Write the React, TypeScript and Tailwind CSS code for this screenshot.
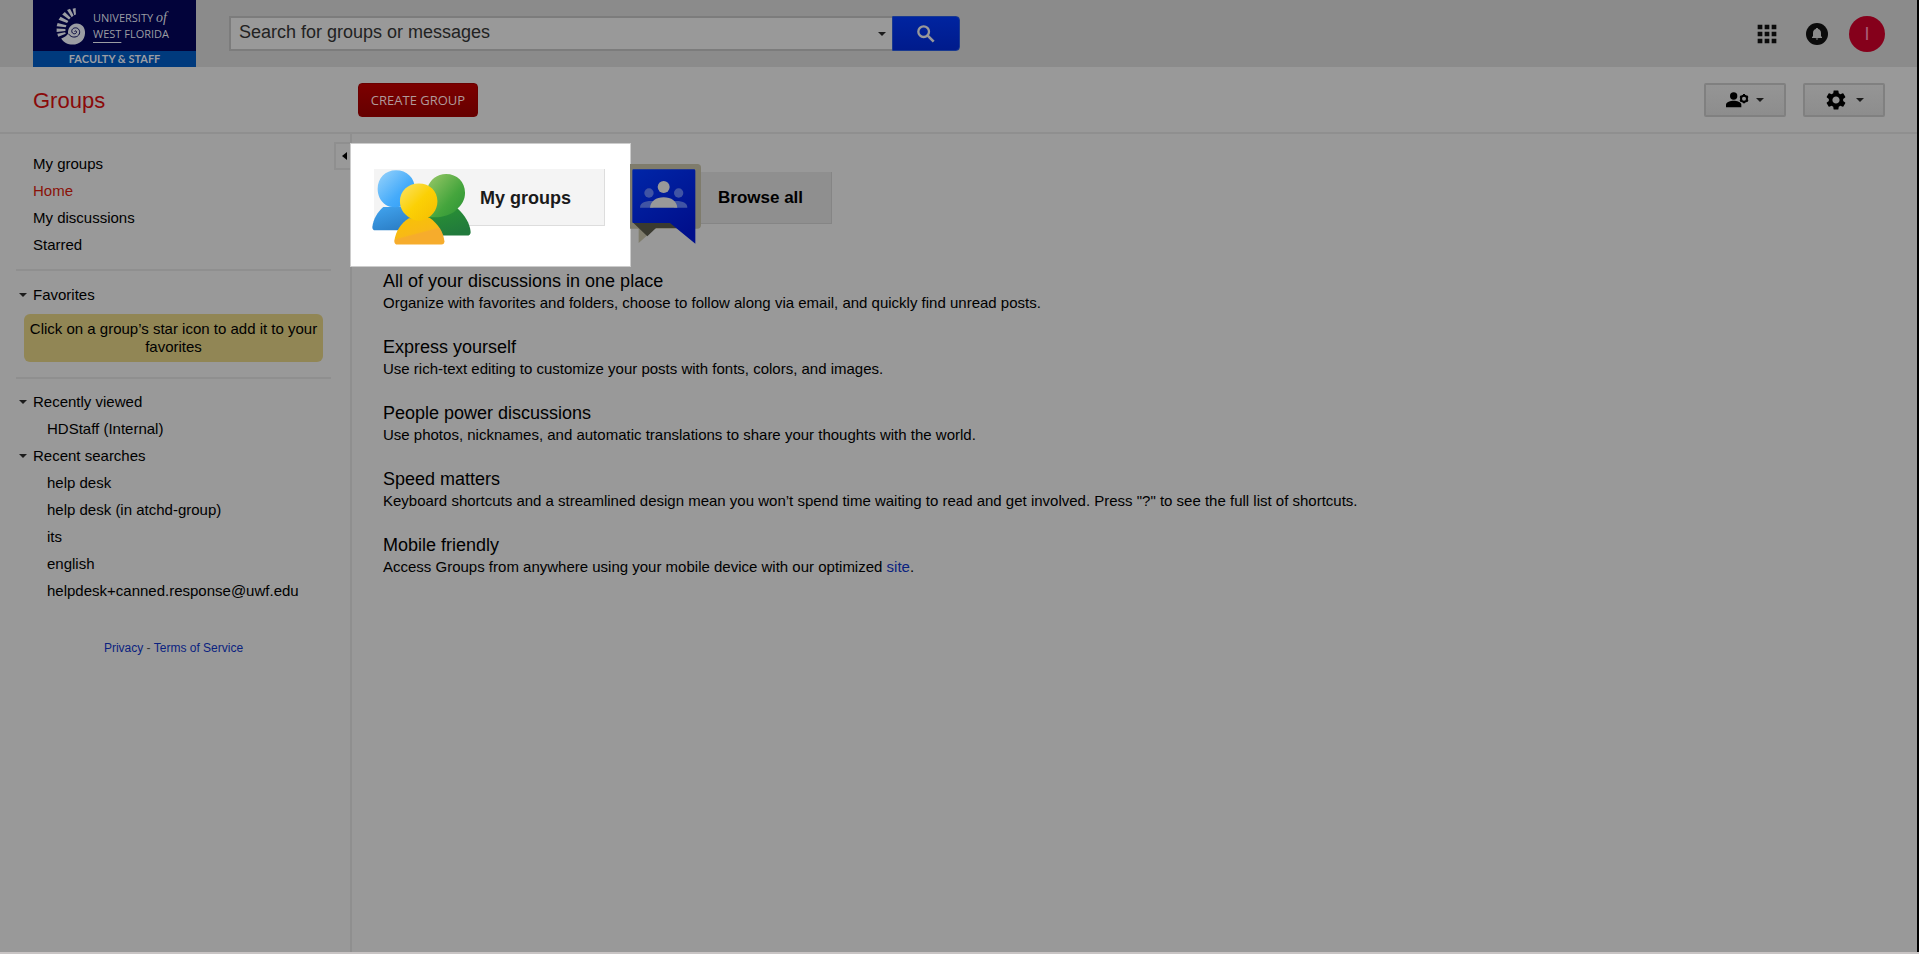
import React from 'react';
import { MdApps, MdSettings } from 'react-icons/md';

interface Feature {
  title: string;
  text: React.ReactNode;
}

const navItems = ['My groups', 'Home', 'My discussions', 'Starred'];

const recentSearches = [
  'help desk',
  'help desk (in atchd-group)',
  'its',
  'english',
  'helpdesk+canned.response@uwf.edu',
];

const features: Feature[] = [
  {
    title: 'All of your discussions in one place',
    text: 'Organize with favorites and folders, choose to follow along via email, and quickly find unread posts.',
  },
  {
    title: 'Express yourself',
    text: 'Use rich-text editing to customize your posts with fonts, colors, and images.',
  },
  {
    title: 'People power discussions',
    text: 'Use photos, nicknames, and automatic translations to share your thoughts with the world.',
  },
  {
    title: 'Speed matters',
    text: 'Keyboard shortcuts and a streamlined design mean you won’t spend time waiting to read and get involved. Press "?" to see the full list of shortcuts.',
  },
  {
    title: 'Mobile friendly',
    text: (
      <>
        Access Groups from anywhere using your mobile device with our optimized{' '}
        <a href="#site" className="text-[#0a2280]">
          site
        </a>
        .
      </>
    ),
  },
];

const Caret = () => (
  <svg viewBox="0 0 8 4" className="w-2 h-1 shrink-0" fill="#1c1c1c" aria-hidden="true">
    <path d="M0 0 H8 L4 4 Z" />
  </svg>
);

const SearchIcon = () => (
  <svg viewBox="0 0 54 54" className="size-[18px]" fill="none" stroke="#999" aria-hidden="true">
    <circle cx="20" cy="20" r="16" strokeWidth="7" />
    <path d="M32 32 L50 50" strokeWidth="8" />
  </svg>
);

const Nautilus = () => (
  <svg viewBox="165 15 98 120" className="w-8 h-10 shrink-0" aria-hidden="true">
    <g fill="#9b9da3">
      <path d="M219 22 L228 20 L229 40 L224 42 Z" />
      <path d="M202 26 L211 22 L222 43 L216 48 Z" />
      <path d="M187 40 L195 32 L213 50 L208 55 Z" />
      <path d="M176 56 L182 47 L206 60 L202 66 Z" />
      <path d="M170 76 L173 66 L200 73 L198 79 Z" />
      <path d="M170 93 L170 83 L197 84 L197 90 Z" />
      <path d="M175 108 L172 99 L196 94 L198 99 Z" />
      <path d="M184 113 C194 111 200 105 205 99 C203 82 214 68 231 67 C248 67 258 80 257 97 C256 118 240 132 219 132 C204 132 190 124 184 113 Z" />
    </g>
    <path
      d="M207 99 C211 108 224 112 234 106 C244 99 242 84 231 81 C222 79 214 86 217 94 C220 101 231 100 231 93 C230 89 226 89 225 92"
      fill="none"
      stroke="#02033a"
      strokeWidth="3"
    />
  </svg>
);

const Logo = () => (
  <a
    href="#uwf"
    className="flex flex-col w-[163px] h-[67px] shrink-0 bg-[#02033a] text-[#9b9da3]"
  >
    <div className="flex flex-1 items-center gap-1.5 pl-[22px]">
      <Nautilus />
      <div className="font-['Open_Sans',sans-serif] text-[11px] leading-4">
        <div>
          UNIVERSITY{' '}
          <span className="font-['Liberation_Serif',serif] italic text-sm leading-4">of</span>
        </div>
        <div>
          <span className="underline underline-offset-4">WEST</span> FLORIDA
        </div>
      </div>
    </div>
    <div className="h-4 bg-[#003a7d] text-center font-[Lato,sans-serif] font-bold text-[11px] leading-4">
      FACULTY &amp; STAFF
    </div>
  </a>
);

const BellIcon = () => (
  <svg viewBox="0 0 22 22" className="size-[22px]" aria-hidden="true">
    <circle cx="11" cy="11" r="11" fill="#0b0b0b" />
    <path
      d="M11 5 C11.8 5 12.2 5.5 12.2 6.1 C14 6.6 15 8 15 10 V13 L16 14.2 V15 H6 V14.2 L7 13 V10 C7 8 8 6.6 9.8 6.1 C9.8 5.5 10.2 5 11 5 Z M9.8 15.6 H12.2 C12.2 17 9.8 17 9.8 15.6 Z"
      fill="#8b8b8b"
    />
  </svg>
);

const MembersIcon = () => (
  <svg viewBox="0 0 69 46" className="w-[23px] h-4" aria-hidden="true">
    <circle cx="23" cy="11" r="11" />
    <path d="M0 45 V37 C0 29 14 25 23 25 C32 25 46 29 46 37 V45 Z" />
    <circle cx="54" cy="19" r="9" fill="none" stroke="#000" strokeWidth="6" />
    <path
      d="M54 5 V9 M54 29 V33 M42 12 L46 14 M62 24 L66 26 M42 26 L46 24 M62 14 L66 12"
      stroke="#000"
      strokeWidth="6"
    />
  </svg>
);

const PeopleIcon = () => (
  <svg viewBox="126 118 298 231" className="absolute -left-0.5 top-0 w-[99px] h-[77px]" aria-hidden="true">
    <defs>
      <linearGradient id="blueHead" x1="0" y1="0" x2="1" y2="1">
        <stop offset="0" stopColor="#9ad4fb" />
        <stop offset="0.6" stopColor="#45abfa" />
        <stop offset="1" stopColor="#2f9cf6" />
      </linearGradient>
      <linearGradient id="blueBody" x1="0" y1="0" x2="0.6" y2="1">
        <stop offset="0" stopColor="#42a5f0" />
        <stop offset="1" stopColor="#2b7ec6" />
      </linearGradient>
      <linearGradient id="greenHead" x1="0" y1="0" x2="1" y2="1">
        <stop offset="0" stopColor="#9ac968" />
        <stop offset="0.6" stopColor="#45a53d" />
        <stop offset="1" stopColor="#2b9235" />
      </linearGradient>
      <linearGradient id="greenBody" x1="0" y1="0" x2="0.5" y2="1">
        <stop offset="0" stopColor="#2a9433" />
        <stop offset="1" stopColor="#217a3c" />
      </linearGradient>
      <linearGradient id="goldHead" x1="0" y1="0" x2="1" y2="1">
        <stop offset="0" stopColor="#fbe36a" />
        <stop offset="0.5" stopColor="#fbd005" />
        <stop offset="1" stopColor="#f5bd02" />
      </linearGradient>
      <linearGradient id="goldBody" x1="0.2" y1="0" x2="0.7" y2="1">
        <stop offset="0" stopColor="#f8c206" />
        <stop offset="0.55" stopColor="#f8b916" />
        <stop offset="0.6" stopColor="#f6ac2c" />
      </linearGradient>
    </defs>
    <path
      d="M160 232 C142 248 130 268 127 292 C127 299 130 302 136 302 H258 V232 Z"
      fill="url(#blueBody)"
    />
    <path
      d="M198 121 C231 121 255 144 255 176 C255 205 233 230 205 232 C190 234 178 232 168 226 C151 214 143 197 143 177 C143 145 166 121 198 121 Z"
      fill="url(#blueHead)"
    />
    <path
      d="M290 250 L383 236 C406 258 420 280 423 307 C423 314 419 318 412 318 H300 Z"
      fill="url(#greenBody)"
    />
    <path
      d="M349 133 C382 133 406 157 406 189 C406 210 397 225 380 240 C371 251 353 258 325 263 L298 263 L293 175 C301 149 322 133 349 133 Z"
      fill="url(#greenHead)"
    />
    <path
      d="M237 266 C213 281 198 304 193 334 C193 341 197 345 203 345 H335 C341 345 344 341 344 335 C341 307 325 282 299 264 Z"
      fill="url(#goldBody)"
    />
    <path
      d="M267 161 C300 161 323 184 323 215 C323 242 305 264 281 271 C272 274 260 274 251 270 C226 261 210 240 210 215 C210 184 234 161 267 161 Z"
      fill="url(#goldHead)"
    />
  </svg>
);

const BrowseIcon = () => (
  <svg viewBox="30 38 216 246" className="absolute -left-px -top-[9px] w-[72px] h-[82px]" aria-hidden="true">
    <defs>
      <linearGradient id="bubble" x1="0" y1="0" x2="0.6" y2="1">
        <stop offset="0" stopColor="#0026a8" />
        <stop offset="1" stopColor="#000f8c" />
      </linearGradient>
    </defs>
    <path
      d="M30 41 H232 Q243 41 243 52 V223 Q243 235 232 235 H104 L56 278 V235 H30 Z"
      fill="#7f7c6c"
    />
    <path d="M38 216 H180 V233 H108 L82 258 Z" fill="#3a3a30" />
    <path
      d="M40 57 H222 Q226 57 226 61 V280 L150 218 H40 Q37 218 37 214 V61 Q37 57 40 57 Z"
      fill="url(#bubble)"
    />
    <g fill="#4054a4">
      <circle cx="87" cy="128" r="14" />
      <circle cx="176" cy="128" r="14" />
      <path d="M60 172 C60 158 72 151 100 152 V172 Z" />
      <path d="M202 172 C202 158 190 151 162 152 V172 Z" />
    </g>
    <g fill="#999">
      <circle cx="131" cy="110" r="18" />
      <path d="M90 172 C92 152 108 141 131 141 C154 141 170 152 172 172 Z" />
    </g>
  </svg>
);

const SectionHeading: React.FC<{ label: string }> = ({ label }) => (
  <h2>
    <button className="flex items-center gap-1.5 pl-[3px]">
      <Caret />
      {label}
    </button>
  </h2>
);

const Sidebar = () => (
  <aside className="flex w-[350px] shrink-0 pl-4 pt-4 text-[15px] leading-[27px]">
    <div className="w-[315px]">
      <nav className="flex flex-col items-start pl-[17px] pb-[11px] border-b-2 border-[#8f8f8f]">
        {navItems.map((item) => (
          <a
            key={item}
            href="#nav"
            className={item === 'Home' ? 'text-[#8a1208]' : undefined}
          >
            {item}
          </a>
        ))}
      </nav>
      <section className="pt-[10px] pb-[15px] border-b-2 border-[#8f8f8f]">
        <SectionHeading label="Favorites" />
        <p className="mt-[6px] mx-2 py-[6px] px-1 rounded-md bg-[#918655] text-center leading-[18px]">
          Click on a group’s star icon to add it to your favorites
        </p>
      </section>
      <section className="pt-[9px]">
        <SectionHeading label="Recently viewed" />
        <ul className="pl-[31px]">
          <li>
            <a href="#hdstaff">HDStaff (Internal)</a>
          </li>
        </ul>
        <SectionHeading label="Recent searches" />
        <ul className="pl-[31px]">
          {recentSearches.map((search) => (
            <li key={search}>
              <a href="#search">{search}</a>
            </li>
          ))}
        </ul>
      </section>
      <div className="pt-[31px] text-center text-xs leading-[27px] text-[#333]">
        <a href="#privacy" className="text-[#0a2280]">
          Privacy
        </a>{' '}
        -{' '}
        <a href="#terms" className="text-[#0a2280]">
          Terms of Service
        </a>
      </div>
    </div>
    <button
      aria-label="Collapse sidebar"
      className="-mt-2 ml-auto flex w-4 h-7 items-center justify-end pr-[3px] border-2 border-r-0 border-[#8f8f8f]"
    >
      <svg viewBox="0 0 5 8" className="w-[5px] h-2" aria-hidden="true">
        <path d="M5 0 V8 L0 4 Z" />
      </svg>
    </button>
  </aside>
);

const App: React.FC = () => {
  return (
    <div className="min-h-screen flex bg-black pr-0.5 border-b-2 border-[#c8c4c4] font-['Liberation_Sans',Arial,sans-serif] text-black">
      <div className="flex flex-1 flex-col bg-[#999]">
        <header className="flex items-center h-[67px] bg-[#8b8b8b] pl-[33px] pr-8">
          <Logo />
          <form className="flex ml-[33px] h-[35px] w-[731px]">
            <div className="flex flex-1 items-center bg-[#999] border-2 border-r-0 border-[#7c7c7c]">
              <input
                type="text"
                aria-label="Search for groups or messages"
                placeholder="Search for groups or messages"
                className="flex-1 pl-2 pb-1 text-lg leading-6 outline-none placeholder:text-[#222]"
              />
              <button type="button" aria-label="Search options" className="px-1.5">
                <Caret />
              </button>
            </div>
            <button
              type="submit"
              aria-label="Search"
              className="flex items-center justify-center w-[68px] rounded-r-sm bg-linear-to-b from-[#0024a0] to-[#001b8c] border border-[#1a3a90]"
            >
              <SearchIcon />
            </button>
          </form>
          <div className="ml-auto flex items-center">
            <button aria-label="Apps" className="mr-[25px]">
              <MdApps className="size-7 text-[#0b0b0b]" />
            </button>
            <button aria-label="Notifications" className="mr-[21px]">
              <BellIcon />
            </button>
            <button className="size-9 rounded-full bg-[#85001b] text-[#a9607a] text-lg leading-9">
              I
            </button>
          </div>
        </header>
        <div className="flex items-center h-[67px] pl-[33px] pr-8 border-b-2 border-[#8f8f8f]">
          <h1 className="w-[325px] pt-0.5 text-[22px] leading-7 text-[#8a0a0a]">Groups</h1>
          <button className="w-[120px] h-[34px] rounded-sm bg-linear-to-b from-[#7c0000] to-[#660000] border border-[#6a0000] font-['Open_Sans',sans-serif] text-[13px] leading-5 text-[#b09a9a]">
            CREATE GROUP
          </button>
          <div className="ml-auto flex gap-[17px]">
            <button
              aria-label="Members"
              className="flex items-center justify-center gap-[7px] w-[82px] h-[34px] rounded-xs border-2 border-[#808080] bg-linear-to-b from-[#959595] to-[#8d8d8d]"
            >
              <MembersIcon />
              <Caret />
            </button>
            <button
              aria-label="Settings"
              className="flex items-center justify-center gap-2 w-[82px] h-[34px] rounded-xs border-2 border-[#808080] bg-linear-to-b from-[#959595] to-[#8d8d8d]"
            >
              <MdSettings className="size-6" />
              <Caret />
            </button>
          </div>
        </div>
        <div className="flex flex-1">
          <Sidebar />
          <main className="flex-1 border-l-2 border-[#8f8f8f]">
            <div className="flex items-start mt-[9px] -ml-0.5">
              <div className="h-[124px] w-[281px] bg-white border border-[#ccc] pt-[25px] pl-[23px]">
                <a
                  href="#my-groups"
                  className="relative flex items-center w-[231px] h-[57px] pl-[106px] pt-px bg-[#f4f4f4] border-r border-b border-[#ddd] font-bold text-lg text-[#1a1a1a]"
                >
                  <PeopleIcon />
                  My groups
                </a>
              </div>
              <a
                href="#browse"
                className="relative flex items-center mt-[29px] w-[201px] h-[52px] pl-[87px] pt-px bg-[#8f8f8f] border-r border-b border-[#858585] font-bold text-[17px]"
              >
                <BrowseIcon />
                Browse all
              </a>
            </div>
            <div className="flex flex-col gap-[23px] pt-[3px] pl-[31px] pr-8">
              {features.map(({ title, text }) => (
                <section key={title}>
                  <h2 className="text-lg leading-[22px]">{title}</h2>
                  <p className="text-[15px] leading-[21px]">{text}</p>
                </section>
              ))}
            </div>
          </main>
        </div>
      </div>
    </div>
  );
};

export default App;
